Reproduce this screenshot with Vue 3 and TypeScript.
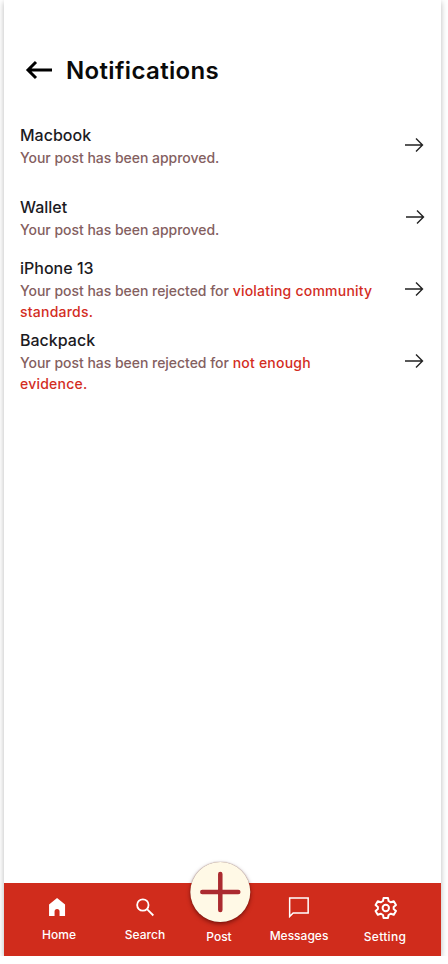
<script setup lang="ts">
interface Notice { title: string; text: string; flagged?: string }
const notices: Notice[] = [
  { title: 'Macbook', text: 'Your post has been approved.' },
  { title: 'Wallet', text: 'Your post has been approved.' },
  { title: 'iPhone 13', text: 'Your post has been rejected for ', flagged: 'violating community standards.' },
  { title: 'Backpack', text: 'Your post has been rejected for ', flagged: 'not enough evidence.' },
]
</script>

<template>
  <div class="screen">
    <header class="header">
      <svg class="back" width="28" height="20" viewBox="0 0 28 20" fill="none" stroke="#000" stroke-width="3">
        <path d="M27 10H3M11 2 3 10l8 8" />
      </svg>
      <h1>Notifications</h1>
    </header>

    <main class="list">
      <div v-for="n in notices" :key="n.title" class="row">
        <div class="copy">
          <div class="title">{{ n.title }}</div>
          <div class="text">{{ n.text }}<span v-if="n.flagged" class="flag">{{ n.flagged }}</span></div>
        </div>
        <svg class="arrow" width="20" height="16" viewBox="0 0 20 16" fill="none" stroke="#222" stroke-width="1.4">
          <path d="M0 8h17.500M11 1.500 17.500 8 11 14.500" />
        </svg>
      </div>
    </main>

    <nav class="nav">
      <div class="item home">
        <svg width="20" height="20" viewBox="0 0 20 20" fill="#fff"><path d="M10 1 18 7.500V19h-5.500v-4.500a2.500 2.500 0 0 0-5 0V19H2V7.500z" /></svg>
        <span>Home</span>
      </div>
      <div class="item search">
        <svg width="20" height="20" viewBox="0 0 20 20" fill="none" stroke="#fff" stroke-width="1.800"><circle cx="8" cy="8" r="5.700" /><path d="m12.200 12.200 6.300 6.300" /></svg>
        <span>Search</span>
      </div>
      <div class="item post">
        <div class="fab">
          <svg width="42" height="42" viewBox="0 0 42 42" fill="none" stroke="#ab2b30" stroke-width="4.500" stroke-linecap="round"><path d="M21 3v36M3 21h36" /></svg>
        </div>
        <span>Post</span>
      </div>
      <div class="item messages">
        <svg width="22" height="22" viewBox="0 0 22 22" fill="none" stroke="#fff" stroke-width="1.500"><path d="M2 2h18.500v15H5.500L2 20.500z" /></svg>
        <span>Messages</span>
      </div>
      <div class="item setting">
        <svg width="24" height="24" viewBox="0 0 24 24" fill="none" stroke="#fff" stroke-width="2" stroke-linejoin="round">
          <circle cx="12" cy="12" r="3.200" />
          <path d="M9.800 2h4.400l.6 3 2.300 1.300 2.900-1 2.200 3.800-2.300 2 0 1.800 2.300 2-2.200 3.800-2.900-1-2.300 1.300-.6 3H9.800l-.6-3-2.300-1.300-2.900 1-2.200-3.800 2.300-2 0-1.800-2.300-2 2.200-3.800 2.900 1 2.300-1.300z" />
        </svg>
        <span>Setting</span>
      </div>
    </nav>
  </div>
</template>

<style>
html, body { margin: 0; background: #fff; }
</style>

<style scoped>
.screen {
  box-sizing: border-box;
  width: 437px;
  height: 956px;
  margin-left: 4px;
  display: flex;
  flex-direction: column;
  background: #fff;
  font-family: Inter, "Liberation Sans", sans-serif;
  box-shadow: 0 2px 6px rgba(0, 0, 0, 0.28);
}
.header {
  display: flex;
  align-items: center;
  gap: 13px;
  height: 32px;
  margin-top: 54px;
  padding-left: 21px;
}
.back { flex: none; }
h1 {
  margin: 0;
  font-size: 24px;
  font-weight: 600;
  letter-spacing: 0.35px;
  color: #0a0a0a;
}
.list {
  flex: 1;
  padding-top: 23px;
}
.row {
  box-sizing: border-box;
  height: 72px;
  display: flex;
  align-items: center;
  justify-content: space-between;
  padding: 0 16px;
}
.row:nth-child(2) .arrow { margin-right: -1px; }
.copy { width: 356px; }
.title {
  font-size: 16px;
  line-height: 24px;
  font-weight: 500;
  color: #1c1b1f;
}
.text {
  font-size: 14px;
  line-height: 21px;
  font-weight: 500;
  color: #84605f;
  letter-spacing: -0.03px;
}
.flag { color: #d32d1f; font-weight: 500; letter-spacing: 0.22px; }
.nav {
  position: relative;
  height: 73px;
  display: flex;
  background: #d02c1c;
}
.item {
  position: absolute;
  top: 0;
  display: flex;
  flex-direction: column;
  align-items: center;
  transform: translateX(-50%);
  color: #fff;
  font-size: 12px;
  line-height: 16px;
  font-weight: 500;
  white-space: nowrap;
}
.item svg { display: block; }
.item span { display: block; }
.home { left: 55px; padding-top: 14px; gap: 10px; }
.home svg { margin-right: 3px; }
.search { left: 141px; padding-top: 14px; gap: 10px; }
.post { left: 215px; padding-top: 46px; }
.messages { left: 295px; padding-top: 13px; gap: 10px; }
.setting { left: 381px; padding-top: 13px; gap: 9px; }
.setting svg { margin-left: 2px; }
.setting span { letter-spacing: 0.3px; }
.fab {
  position: absolute;
  top: -21px;
  left: calc(50% + 1px);
  transform: translateX(-50%);
  box-sizing: border-box;
  width: 60px;
  height: 60px;
  border-radius: 50%;
  background: #fff9e6;
  display: flex;
  align-items: center;
  justify-content: center;
  box-shadow: 0 2px 4px rgba(60, 0, 0, 0.55), 0 0 1px rgba(60, 0, 0, 0.6);
}
</style>
